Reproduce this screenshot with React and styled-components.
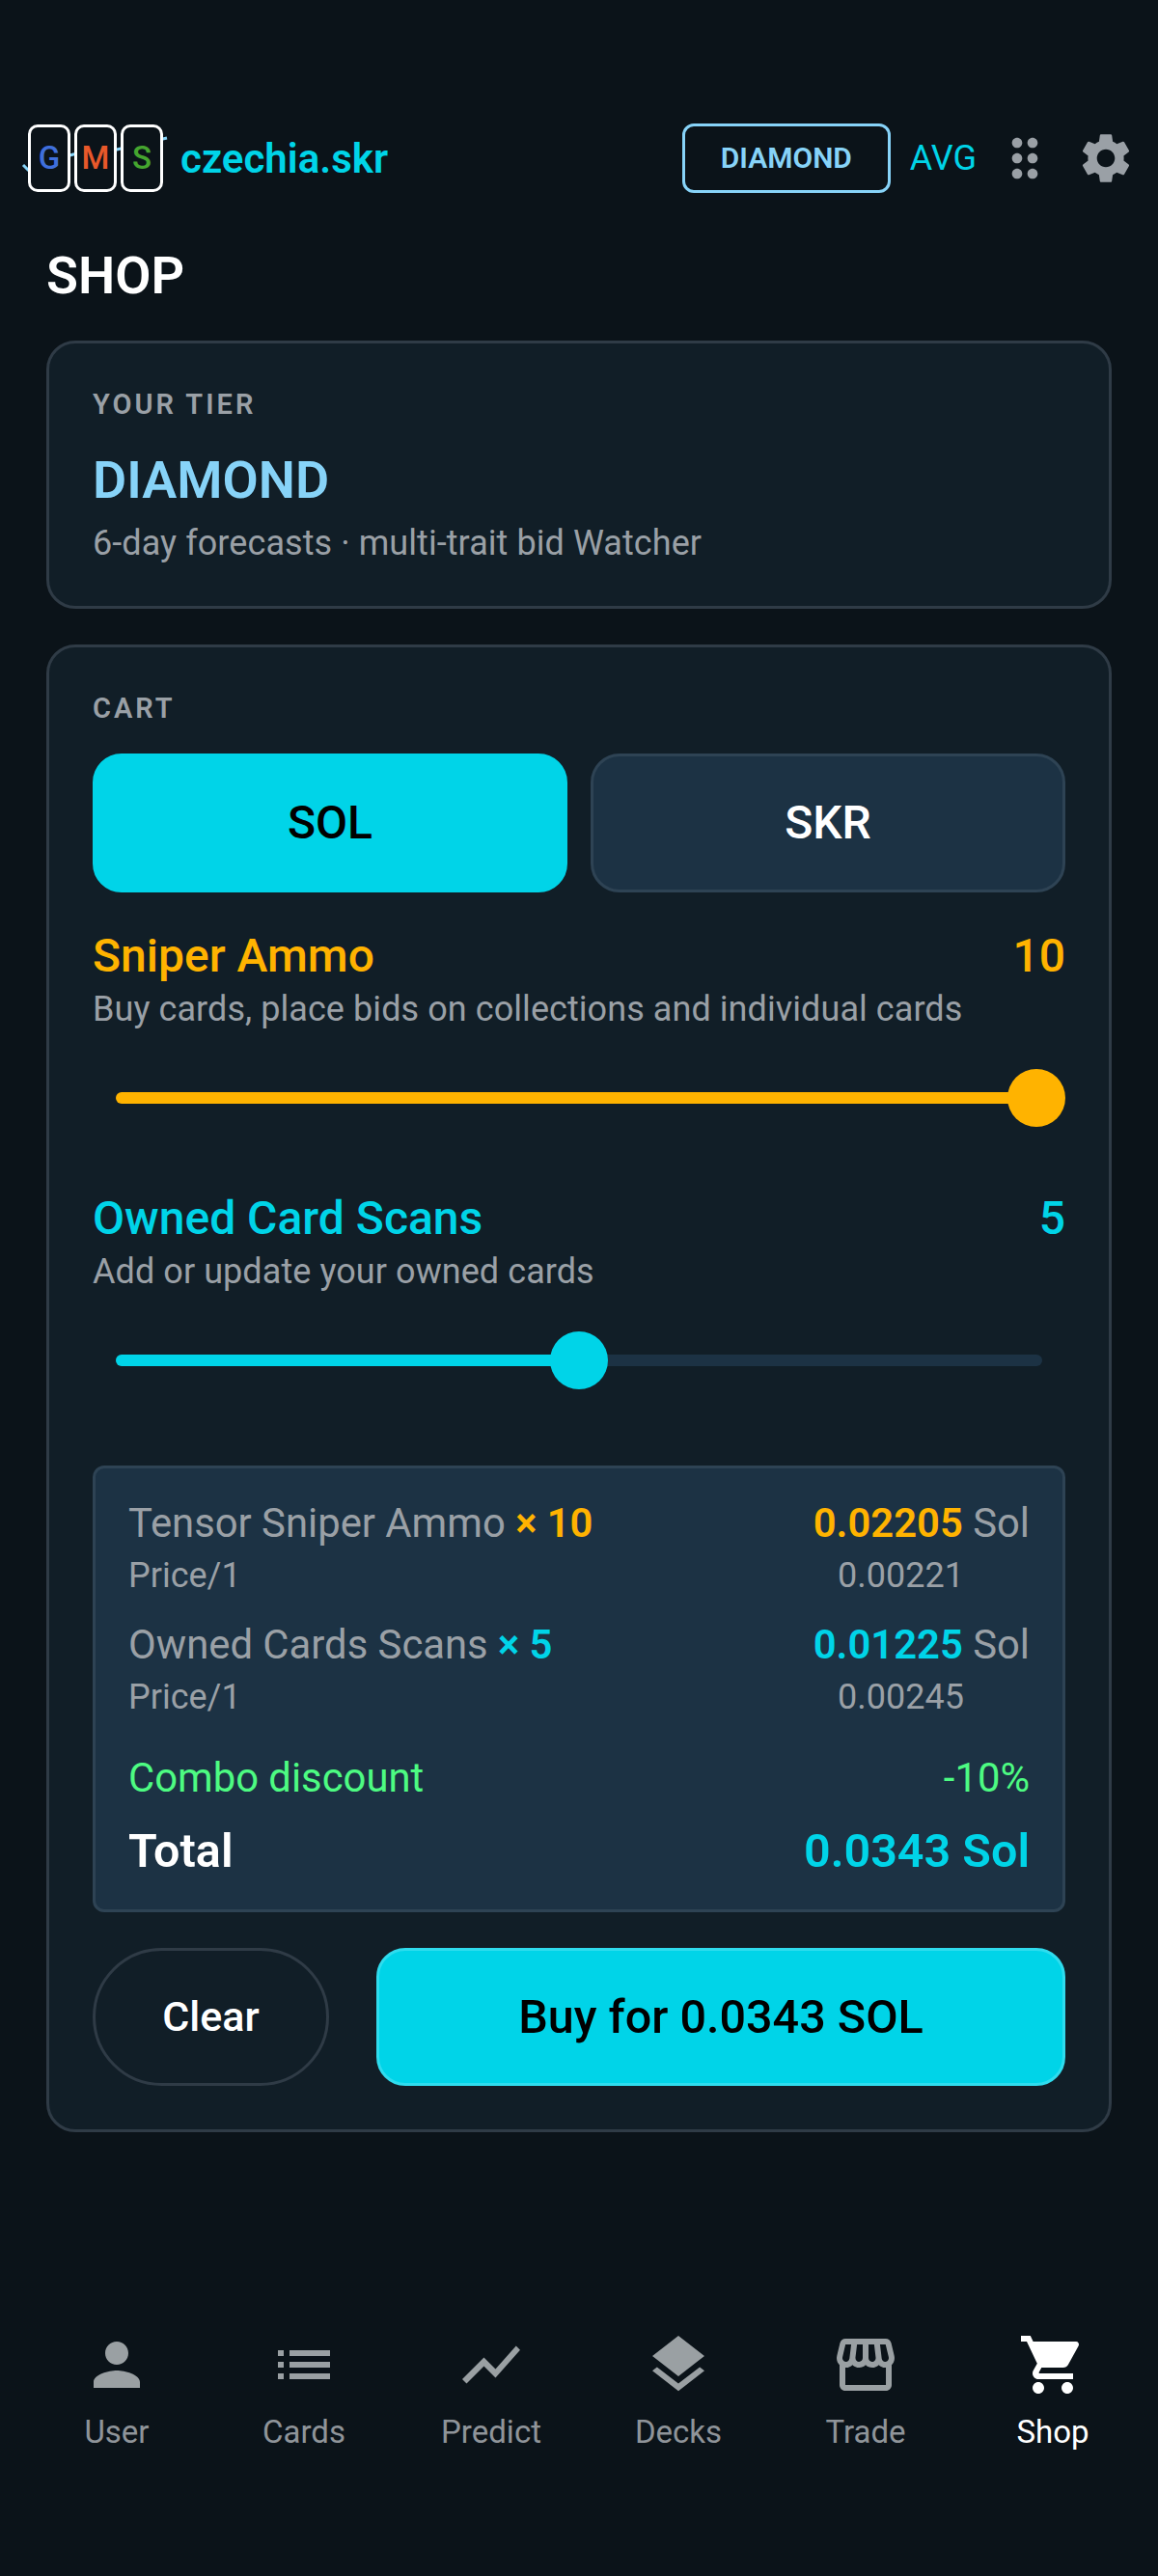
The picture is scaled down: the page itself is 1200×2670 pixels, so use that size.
import React from "react";
import styled, { createGlobalStyle } from "styled-components";
import {
  MdPerson,
  MdList,
  MdShowChart,
  MdLayers,
  MdOutlineStorefront,
  MdShoppingCart,
  MdSettings,
  MdDragIndicator,
} from "react-icons/md";

const CYAN = "#00d4e8";
const AMBER = "#ffb300";
const ICE = "#87d3f8";
const GREY = "#9aa0a6";
const PAGE_BG = "#0b1319";

const GlobalStyle = createGlobalStyle`
  html, body {
    margin: 0;
    padding: 0;
    background: ${PAGE_BG};
    font-family: Roboto, "Liberation Sans", sans-serif;
  }
  * {
    box-sizing: border-box;
  }
`;

const Page = styled.div`
  width: 1200px;
  height: 2670px;
  display: flex;
  flex-direction: column;
  background: ${PAGE_BG};
`;

const Header = styled.header`
  display: flex;
  align-items: center;
  height: 72px;
  margin-top: 128px;
  padding: 0 23px 0 29px;
`;

const Logo = styled.div`
  position: relative;
  display: flex;
  gap: 4px;
`;

const LogoLine = styled.svg`
  position: absolute;
  left: -8px;
  top: 0;
  width: 160px;
  height: 70px;
`;

const Tile = styled.div`
  position: relative;
  width: 44px;
  height: 70px;
  border: 3px solid #fff;
  border-radius: 10px;
  background: ${PAGE_BG};
  color: ${(p) => p.$color};
  font-size: 33px;
  font-weight: 500;
  line-height: 64px;
  text-align: center;
`;

const Username = styled.div`
  margin-left: 18px;
  color: ${CYAN};
  font-size: 42px;
  font-weight: 600;
`;

const HeaderRight = styled.div`
  display: flex;
  align-items: center;
  margin-left: auto;
`;

const TierChip = styled.div`
  width: 216px;
  height: 72px;
  border: 3px solid ${ICE};
  border-radius: 12px;
  color: ${ICE};
  font-size: 30px;
  font-weight: 600;
  line-height: 66px;
  text-align: center;
`;

const AvgLabel = styled.div`
  margin-left: 20px;
  color: ${CYAN};
  font-size: 36px;
`;

const DotsIcon = styled(MdDragIndicator)`
  margin-left: 18px;
  color: ${GREY};
`;

const GearIcon = styled(MdSettings)`
  margin-left: 21px;
  color: ${GREY};
`;

const Content = styled.main`
  display: flex;
  flex-direction: column;
  padding: 0 48px;
`;

const Title = styled.h1`
  margin: 56px 0 0;
  height: 60px;
  color: #fff;
  font-size: 54px;
  font-weight: 600;
  line-height: 60px;
`;

const Card = styled.section`
  margin-top: ${(p) => p.$top}px;
  padding: ${(p) => p.$pad}px 45px ${(p) => p.$bottom}px;
  background: #111e27;
  border: 3px solid #2f3b46;
  border-radius: 30px;
`;

const Eyebrow = styled.div`
  color: ${GREY};
  font-size: 29px;
  font-weight: 600;
  letter-spacing: 3px;
  line-height: 36px;
`;

const TierName = styled.div`
  margin-top: 31px;
  color: ${ICE};
  font-size: 54px;
  font-weight: 600;
  line-height: 60px;
`;

const TierNote = styled.div`
  margin-top: 11px;
  color: ${GREY};
  font-size: 36px;
  letter-spacing: 0.07px;
  line-height: 48px;
`;

const Toggle = styled.div`
  display: grid;
  grid-template-columns: 1fr 1fr;
  gap: 24px;
  margin-top: 29px;
`;

const ToggleButton = styled.div`
  height: 144px;
  border: 3px solid ${(p) => (p.$active ? CYAN : "#2e4354")};
  border-radius: 30px;
  background: ${(p) => (p.$active ? CYAN : "#1c3244")};
  color: ${(p) => (p.$active ? "#000" : "#fff")};
  font-size: 48px;
  font-weight: 500;
  line-height: 138px;
  text-align: center;
`;

const ItemHead = styled.div`
  display: flex;
  justify-content: space-between;
  margin-top: ${(p) => p.$top}px;
  color: ${(p) => p.$color};
  font-size: 48px;
  font-weight: 500;
  line-height: 56px;
`;

const ItemNote = styled.div`
  margin-top: 3px;
  color: ${GREY};
  font-size: 36px;
  letter-spacing: 0.07px;
  line-height: 48px;
`;

const Slider = styled.div`
  position: relative;
  height: 60px;
  margin-top: 38px;
  padding: 24px;
`;

const Track = styled.div`
  height: 12px;
  border-radius: 6px;
  background: #1c3244;
  overflow: hidden;
`;

const TrackFill = styled.div`
  height: 100%;
  background: ${(p) => p.$color};
`;

const Thumb = styled.div`
  position: absolute;
  top: 0;
  width: 60px;
  height: 60px;
  border-radius: 50%;
  background: ${(p) => p.$color};
`;

const Summary = styled.div`
  margin-top: 79px;
  padding: 30px 34px 30px;
  height: 463px;
  background: #1c3244;
  border: 3px solid #2e4354;
  border-radius: 12px;
`;

const Row = styled.div`
  display: flex;
  justify-content: space-between;
  margin-top: ${(p) => p.$top || 0}px;
  color: ${(p) => p.$color || GREY};
  font-size: ${(p) => p.$size || 41.8}px;
  font-weight: ${(p) => p.$weight || 400};
  line-height: ${(p) => p.$lh || 54}px;
`;

const Strong = styled.span`
  color: ${(p) => p.$color};
  font-weight: 600;
`;

const PriceValue = styled.span`
  padding-right: 68px;
`;

const Actions = styled.div`
  display: flex;
  gap: 49px;
  margin-top: 37px;
`;

const ClearButton = styled.div`
  width: 245px;
  height: 143px;
  border: 3px solid #2f3b46;
  border-radius: 72px;
  color: #fff;
  font-size: 43px;
  font-weight: 500;
  line-height: 137px;
  text-align: center;
`;

const BuyButton = styled.div`
  flex: 1;
  height: 143px;
  border-radius: 30px;
  background: ${CYAN};
  border: 3px solid #2fdcee;
  color: #000;
  font-size: 48.5px;
  font-weight: 500;
  line-height: 137px;
  text-align: center;
`;

const BottomNav = styled.nav`
  display: grid;
  grid-template-columns: repeat(6, 194px);
  margin-top: auto;
  height: 285px;
  padding: 24px 0 0 24px;
`;

const NavItem = styled.div`
  display: flex;
  flex-direction: column;
  align-items: center;
  color: ${(p) => (p.$active ? "#fff" : "#8f9499")};
  font-size: 33px;
  line-height: 44px;
`;

const NavIcon = styled.div`
  display: flex;
  height: 84px;
  margin-bottom: 6px;
  align-items: center;
  color: ${(p) => (p.$active ? "#fff" : "#9aa0a3")};
`;

const navItems = [
  { label: "User", Icon: MdPerson },
  { label: "Cards", Icon: MdList },
  { label: "Predict", Icon: MdShowChart },
  { label: "Decks", Icon: MdLayers },
  { label: "Trade", Icon: MdOutlineStorefront },
  { label: "Shop", Icon: MdShoppingCart, active: true },
];

const Range = ({ color, pct }) => (
  <Slider>
    <Track>
      <TrackFill $color={color} style={{ width: `${pct}%` }} />
    </Track>
    <Thumb $color={color} style={{ left: `calc((100% - 60px) * ${pct / 100})` }} />
  </Slider>
);

export default function App() {
  return (
    <Page>
      <GlobalStyle />
      <Header>
        <Logo>
          <LogoLine viewBox="0 0 160 70" fill="none">
            <polyline
              points="3,42 8,47 30,38 55,31 100,26 152,14"
              stroke={ICE}
              strokeWidth="3"
            />
          </LogoLine>
          <Tile $color="#3f6fdc">G</Tile>
          <Tile $color="#e8582a">M</Tile>
          <Tile $color="#45a52f">S</Tile>
        </Logo>
        <Username>czechia.skr</Username>
        <HeaderRight>
          <TierChip>DIAMOND</TierChip>
          <AvgLabel>AVG</AvgLabel>
          <DotsIcon size={64} />
          <GearIcon size={62} />
        </HeaderRight>
      </Header>
      <Content>
        <Title>SHOP</Title>
        <Card $top={37} $pad={45} $bottom={41}>
          <Eyebrow>YOUR TIER</Eyebrow>
          <TierName>DIAMOND</TierName>
          <TierNote>6-day forecasts · multi-trait bid Watcher</TierNote>
        </Card>
        <Card $top={37} $pad={45} $bottom={45}>
          <Eyebrow>CART</Eyebrow>
          <Toggle>
            <ToggleButton $active>SOL</ToggleButton>
            <ToggleButton>SKR</ToggleButton>
          </Toggle>
          <ItemHead $top={38} $color={AMBER}>
            <span>Sniper Ammo</span>
            <span>10</span>
          </ItemHead>
          <ItemNote>Buy cards, place bids on collections and individual cards</ItemNote>
          <Range color={AMBER} pct={100} />
          <ItemHead $top={67} $color={CYAN}>
            <span>Owned Card Scans</span>
            <span>5</span>
          </ItemHead>
          <ItemNote>Add or update your owned cards</ItemNote>
          <Range color={CYAN} pct={50} />
          <Summary>
            <Row>
              <span>
                Tensor Sniper Ammo <Strong $color={AMBER}>× 10</Strong>
              </span>
              <span>
                <Strong $color={AMBER}>0.02205</Strong> Sol
              </span>
            </Row>
            <Row $size={36}>
              <span>Price/1</span>
              <PriceValue>0.00221</PriceValue>
            </Row>
            <Row $top={18}>
              <span>
                Owned Cards Scans <Strong $color={CYAN}>× 5</Strong>
              </span>
              <span>
                <Strong $color={CYAN}>0.01225</Strong> Sol
              </span>
            </Row>
            <Row $size={36}>
              <span>Price/1</span>
              <PriceValue>0.00245</PriceValue>
            </Row>
            <Row $top={30} $color="#4dfb82">
              <span>Combo discount</span>
              <span>-10%</span>
            </Row>
            <Row $top={22} $size={48.5} $weight={600} $color="#fff">
              <span>Total</span>
              <Strong $color={CYAN}>0.0343 Sol</Strong>
            </Row>
          </Summary>
          <Actions>
            <ClearButton>Clear</ClearButton>
            <BuyButton>Buy for 0.0343 SOL</BuyButton>
          </Actions>
        </Card>
      </Content>
      <BottomNav>
        {navItems.map(({ label, Icon, active }) => (
          <NavItem key={label} $active={active}>
            <NavIcon $active={active}>
              <Icon size={72} />
            </NavIcon>
            {label}
          </NavItem>
        ))}
      </BottomNav>
    </Page>
  );
}
